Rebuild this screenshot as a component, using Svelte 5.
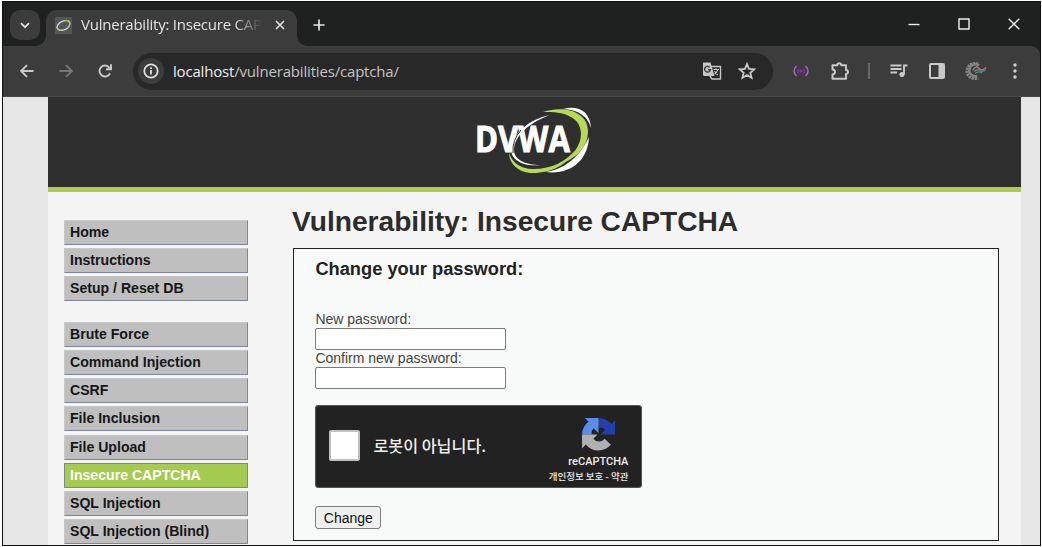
<script>
  const menu = [
    ['Home', 'Instructions', 'Setup / Reset DB'],
    [
      'Brute Force',
      'Command Injection',
      'CSRF',
      'File Inclusion',
      'File Upload',
      'Insecure CAPTCHA',
      'SQL Injection',
      'SQL Injection (Blind)'
    ]
  ];

  let selected = 'Insecure CAPTCHA';
  let newPassword = '';
  let confirmPassword = '';
</script>

<div class="window">
  <div class="titlebar">
    <button class="tab-search" aria-label="Search tabs">
      <svg width="10" height="7" viewBox="0 0 10 7"><path d="M1 1.2l4 4 4-4" /></svg>
    </button>
    <div class="tab">
      <svg class="favicon" width="17" height="17" viewBox="0 0 17 17">
        <rect width="17" height="17" fill="#50565c" />
        <ellipse cx="8.5" cy="8.5" rx="6.8" ry="4.3" transform="rotate(-25 8.5 8.5)" fill="none" stroke="#d8dcd8" stroke-width="1.3" />
        <path d="M9 3.8c4-1.200 6.600.1 5.900 3.200-.4 1.600-1.500 2.900-3 4M2 10c0 3 3 3.800 6 2.800" fill="none" stroke="#a8ba58" stroke-width="1.2" />
      </svg>
      <span class="tab-title">Vulnerability: Insecure CAPTCHA</span>
      <svg class="tab-close" width="10" height="10" viewBox="0 0 10 10"><path d="M1 1l8 8M9 1L1 9" /></svg>
    </div>
    <svg class="new-tab" width="12" height="12" viewBox="0 0 12 12"><path d="M6 .5v11M.5 6h11" /></svg>
    <div class="controls">
      <svg width="12" height="12" viewBox="0 0 12 12"><path d="M.5 6.5h11" /></svg>
      <svg width="12" height="12" viewBox="0 0 12 12"><path d="M1 1h10v10H1z" /></svg>
      <svg width="12" height="12" viewBox="0 0 12 12"><path d="M.7.7l10.6 10.6M11.3.7L.7 11.3" /></svg>
    </div>
  </div>

  <div class="toolbar">
    <div class="nav">
      <svg width="14" height="14" viewBox="0 0 14 14"><path d="M13.5 7H1.5M7 1.2L1.2 7 7 12.8" /></svg>
      <svg class="off" width="14" height="14" viewBox="0 0 14 14"><path d="M.5 7h12M7 1.2L12.8 7 7 12.8" /></svg>
      <svg width="14" height="14" viewBox="0 0 14 14"><path d="M12 9.3A5.5 5.5 0 1 1 11.3 3.6L13 5.3M13 .3v5H8" /></svg>
    </div>
    <div class="address">
      <span class="info">
        <svg width="16" height="16" viewBox="0 0 16 16"><circle cx="8" cy="8" r="6.7" /><path d="M8 7v4.5M8 4.3v1.7" /></svg>
      </span>
      <span class="url"><b>localhost</b>/vulnerabilities/captcha/</span>
      <svg class="translate" width="20" height="20" viewBox="0 0 20 20">
        <path d="M9 5.5h9.5V18H10l-2-3" fill="none" stroke="#c7c7c7" stroke-width="1.4" />
        <path d="M1 1.5h7.5L12.5 15H2.5Q1 15 1 13.5z" fill="#c7c7c7" />
        <path d="M7.6 6.2A2.9 2.9 0 1 0 8.4 8.7H6" fill="none" stroke="#303030" stroke-width="1.3" />
        <path d="M11.5 8.5H17M14 7.2v1.3M15.7 8.7c-.5 2-1.8 3.7-3.2 4.7M12.5 10c1 1.8 2 3 3.5 4" fill="none" stroke="#c7c7c7" stroke-width="1.1" />
      </svg>
      <svg class="star" width="18" height="18" viewBox="0 0 18 18"><path d="M9 2l2 4.9 5.3.4-4 3.4 1.3 5.2L9 13.1l-4.6 2.8 1.3-5.2-4-3.4L7 6.9z" /></svg>
    </div>
    <div class="extensions">
      <svg width="16" height="12" viewBox="0 0 16 12" fill="none" stroke-width="1.5">
        <path d="M3.5 1Q-1.5 6 3.5 11M12.5 1q5 5 0 10" stroke="#a56bb4" />
        <path d="M5.700 3.5q-2 2.5 0 5M10.300 3.5q2 2.5 0 5" stroke="#8529a5" />
        <circle cx="8" cy="6" r="1.5" fill="#a020c0" />
      </svg>
      <svg class="puzzle" width="20" height="20" viewBox="0 0 20 20">
        <path d="M2.5 4.3H7.3Q7.4 2.3 9.3 2.3t1.9 2H16V9q2 .1 2 1.9t-2 2v4.8H2.5v-4.3Q5 13 5 10.9T2.5 8.5z" fill="none" stroke="#c9c9c9" stroke-width="2" stroke-linejoin="round" />
      </svg>
      <span class="divider"></span>
      <svg class="media" width="18" height="14" viewBox="0 0 18 14">
        <path d="M.5 1.5h11M.5 5h11M.5 8.5H7M14 10.5v-9h3.5" stroke="#c9c9c9" stroke-width="1.9" fill="none" />
        <circle cx="11.9" cy="10.5" r="2.5" fill="#c9c9c9" />
      </svg>
      <svg class="panel-icon" width="16" height="16" viewBox="0 0 16 16">
        <rect x="1" y="1" width="14" height="14" rx="1" fill="none" stroke="#c9c9c9" stroke-width="2" />
        <path d="M9.5 1H15v14H9.5z" fill="#c9c9c9" />
      </svg>
      <svg class="avatar" width="22" height="20" viewBox="0 0 22 20" fill="none">
        <path d="M13 3.2A7.6 7.6 0 1 0 13 16.8" stroke="#858585" stroke-width="3" stroke-dasharray="2.2 .8" />
        <path d="M14 4.5A6 6 0 1 0 12 15" stroke="#858585" stroke-width="2.4" />
        <path d="M8 9q3-5 6-1.5t7-1" stroke="#b97b55" stroke-width="1.5" />
        <path d="M9 10.5q4-3 6-1t5.500-1" stroke="#5277a8" stroke-width="1.7" />
        <path d="M10 12.5q4-3 7-.5" stroke="#5c9c67" stroke-width="1.3" />
      </svg>
      <svg class="more" width="4" height="16" viewBox="0 0 4 16" fill="#cfcfcf"><circle cx="2" cy="2" r="1.7" /><circle cx="2" cy="8" r="1.7" /><circle cx="2" cy="14" r="1.7" /></svg>
    </div>
  </div>

  <div class="page">
    <div class="container">
      <header>
        <svg width="120" height="70" viewBox="0 0 120 70">
          <path d="M87 3c14-4 27 1 28 19-3-10-10-18-28-19z" fill="#fff" />
          <path d="M113 31c-1 23-18 38-43 35 18-3 33-14 43-35z" fill="#fff" />
          <path d="M67 6C87-1 112 5 112 25c0 17-13 27-25 32 10-8 18-18 18-29C105 12 90 5 67 6z" fill="#b8d957" />
          <path d="M33 47c3 9 11 16 24 16 19 0 34-8 42-19-7 14-23 23-42 23-15 0-24-10-24-20z" fill="#b8d957" />
          <path d="M74 9C54 16 38 30 38 44c0 9 10 15 27 15-18 2-30-5-30-16C35 29 53 13 74 9z" fill="#fff" />
          <text x="-1" y="46" textLength="95" lengthAdjust="spacingAndGlyphs">DVWA</text>
          <path d="M45 24Q36 34 37 47" fill="none" stroke="#2f2f2f" stroke-width="1" />
        </svg>
      </header>
      <div class="columns">
        <nav>
          {#each menu as group}
            <ul>
              {#each group as item}
                <li class:selected={item === selected}>{item}</li>
              {/each}
            </ul>
          {/each}
        </nav>
        <main>
          <h1>Vulnerability: Insecure CAPTCHA</h1>
          <div class="vulnerable">
            <h3>Change your password:</h3>
            <label for="new">New password:</label>
            <input id="new" type="password" bind:value={newPassword} />
            <label for="confirm">Confirm new password:</label>
            <input id="confirm" type="password" bind:value={confirmPassword} />
            <div class="captcha">
              <span class="checkbox"></span>
              <span class="robot">로봇이 아닙니다.</span>
              <div class="brand">
                <svg width="33" height="33" viewBox="0 0 64 64">
                  <path d="M64 32V4.6l-7.2 7.2A32 32 0 0 0 32 0v18.5A14 14 0 0 1 45 23l-9 9z" fill="#233fa8" />
                  <path d="M32 0H5.6l7 7.2A32 32 0 0 0 0 32h18.5A14 14 0 0 1 22 20l10 9z" fill="#5c8de8" />
                  <path d="M0 32v27l7.2-7.5A32 32 0 0 0 56 52L44 40a14 14 0 0 1-22 0l8-8z" fill="#b0b0b0" />
                </svg>
                <span class="name">reCAPTCHA</span>
                <span class="terms">개인정보 보호 - 약관</span>
              </div>
            </div>
            <button class="change">Change</button>
          </div>
        </main>
      </div>
    </div>
  </div>
</div>

<style>
  :global(body) {
    background: #fff;
    overflow: hidden;
  }

  * {
    box-sizing: border-box;
  }

  .window {
    width: 1039px;
    height: 545px;
    margin: 1px 0 0 2px;
    border: 1px solid #111;
    overflow: hidden;
    background: #3c3c3c;
    font-family: "Liberation Sans", Arial, sans-serif;
  }

  svg {
    flex: none;
    display: block;
  }

  .titlebar {
    height: 44px;
    display: flex;
    align-items: flex-start;
    background: #1f2120;
  }

  .tab-search {
    width: 30px;
    height: 30px;
    margin: 8px 0 0 7px;
    padding: 0;
    border: 0;
    border-radius: 10px;
    display: flex;
    align-items: center;
    justify-content: center;
    background: #3c3c3c;
  }

  .tab-search path,
  .tab-close path,
  .new-tab path {
    fill: none;
    stroke: #e3e3e3;
    stroke-width: 1.7;
  }

  .tab {
    position: relative;
    width: 251px;
    height: 36px;
    margin: 8px 0 0 6px;
    padding: 0 12px 6px 9px;
    border-radius: 11px 11px 0 0;
    display: flex;
    align-items: center;
    background: #3c3c3c;
  }

  .tab::before,
  .tab::after {
    content: '';
    position: absolute;
    bottom: 0;
    width: 10px;
    height: 10px;
  }

  .tab::before {
    left: -10px;
    background: radial-gradient(circle at 0 0, transparent 9.5px, #3c3c3c 10px);
  }

  .tab::after {
    right: -10px;
    background: radial-gradient(circle at 100% 0, transparent 9.5px, #3c3c3c 10px);
  }

  .tab-title {
    width: 181px;
    margin: -2px 0 0 9px;
    overflow: hidden;
    white-space: nowrap;
    font: 15px "Open Sans", sans-serif;
    letter-spacing: -0.23px;
    color: #e3e3e3;
    mask-image: linear-gradient(to right, #000 84%, transparent);
  }

  .tab-close {
    margin-left: 13px;
  }

  .new-tab {
    margin: 17px 0 0 16px;
  }

  .controls {
    display: flex;
    gap: 38px;
    margin: 16px 20px 0 auto;
  }

  .controls path {
    fill: none;
    stroke: #eee;
    stroke-width: 1.4;
  }

  .toolbar {
    height: 51px;
    display: flex;
    align-items: center;
    background: #3c3c3c;
    border-top-right-radius: 9px;
    box-shadow: 9px -9px 0 #1f2120;
    border-bottom: 1px solid #494949;
  }

  .nav {
    display: flex;
    gap: 25px;
    margin-left: 17px;
  }

  .nav path {
    fill: none;
    stroke: #c9c9c9;
    stroke-width: 1.9;
  }

  .nav .off path {
    stroke: #777;
  }

  .address {
    width: 640px;
    height: 37px;
    margin-left: 21px;
    padding: 0 17px 0 5px;
    border-radius: 19px;
    display: flex;
    align-items: center;
    background: #282828;
  }

  .info {
    width: 26px;
    height: 26px;
    border-radius: 50%;
    display: flex;
    align-items: center;
    justify-content: center;
    background: #3c3c3c;
  }

  .info svg {
    fill: none;
    stroke: #ddd;
    stroke-width: 1.8;
  }

  .url {
    margin: -1px 0 0 9px;
    font: 15px "Open Sans", sans-serif;
    letter-spacing: -0.18px;
    color: #c4c4c4;
  }

  .url b {
    font-weight: 400;
    color: #eee;
  }

  .translate {
    margin-left: auto;
  }

  .star {
    margin-left: 16px;
    fill: none;
    stroke: #c9c9c9;
    stroke-width: 1.8;
  }

  .extensions {
    display: flex;
    align-items: center;
    margin-left: 20px;
  }

  .puzzle {
    margin-left: 21px;
  }

  .divider {
    width: 2px;
    height: 16px;
    margin-left: 18px;
    background: #666;
  }

  .media {
    margin-left: 20px;
  }

  .panel-icon {
    margin-left: 21px;
  }

  .avatar {
    margin-left: 20px;
  }

  .more {
    margin-left: 26px;
  }

  .page {
    height: 448px;
    padding: 0 19px 0 45px;
    overflow: hidden;
    background: #e6e6e6;
  }

  .container {
    height: 100%;
    background: #f4f4f4;
  }

  header {
    height: 95px;
    padding: 9px 0 0 428px;
    background: #2f2f2f;
    border-bottom: 5px solid #a9cd4c;
  }

  header text {
    font: bold 35px "Open Sans", sans-serif;
    fill: #fff;
    stroke: #fff;
    stroke-width: 0.9px;
  }

  .columns {
    display: flex;
  }

  nav {
    width: 184px;
    margin: 27.5px 0 0 16px;
  }

  ul {
    margin: 0 0 21.5px;
    padding: 0;
    list-style: none;
  }

  li {
    height: 25px;
    margin-bottom: 3.1px;
    padding-left: 5px;
    border: 1px solid #a9adb8;
    border-color: #c8c8c8 #7d8598 #7d8598 #c8c8c8;
    background: #bfbfbf;
    font-size: 14.1px;
    font-weight: bold;
    line-height: 23px;
    color: #161616;
  }

  li.selected {
    border-color: #7d8598;
    background: #a4cb4f;
    color: #fff;
  }

  main {
    width: 706px;
    margin-left: 45px;
  }

  h1 {
    margin: 13px 0 9px -1px;
    font-size: 28.15px;
    line-height: 34px;
    white-space: nowrap;
    color: #2c2c2c;
  }

  .vulnerable {
    height: 293px;
    padding: 9px 22px 9px 21.4px;
    border: 1px solid #222;
    background: #f8faf9;
  }

  h3 {
    margin: 0 0 31px;
    font-size: 18.25px;
    line-height: 22px;
    color: #222;
  }

  label {
    display: block;
    height: 17px;
    font-size: 14px;
    line-height: 17px;
    color: #444;
  }

  input {
    display: block;
    width: 191px;
    height: 22px;
    border: 1px solid #7b7b7b;
    border-radius: 2px;
    background: #fff;
  }

  .captcha {
    width: 327px;
    height: 83px;
    margin-top: 16px;
    padding-left: 13px;
    border: 1px solid #555;
    border-radius: 3px;
    display: flex;
    align-items: center;
    background: #222;
  }

  .checkbox {
    width: 31px;
    height: 31px;
    margin-top: -2px;
    border: 2px solid #c1c1c1;
    border-radius: 2px;
    background: #fff;
  }

  .robot {
    margin: -3px 0 0 13px;
    font: 500 16.2px "Noto Sans CJK KR", sans-serif;
    color: #eee;
  }

  .brand {
    margin: 8px 13px 0 auto;
    display: flex;
    flex-direction: column;
    align-items: flex-end;
    white-space: nowrap;
    color: #eee;
  }

  .brand svg {
    margin-right: 13px;
  }

  .name {
    margin-top: 4px;
    font: 500 11px/14px Roboto, sans-serif;
  }

  .terms {
    font: 500 9.5px/14px "Noto Sans CJK KR", sans-serif;
  }

  .change {
    width: 66px;
    height: 23px;
    margin-top: 18px;
    padding: 0;
    border: 1px solid #7b7b7b;
    border-radius: 3px;
    background: #efefef;
    font: 14px "Liberation Sans", Arial, sans-serif;
    color: #111;
  }
</style>
